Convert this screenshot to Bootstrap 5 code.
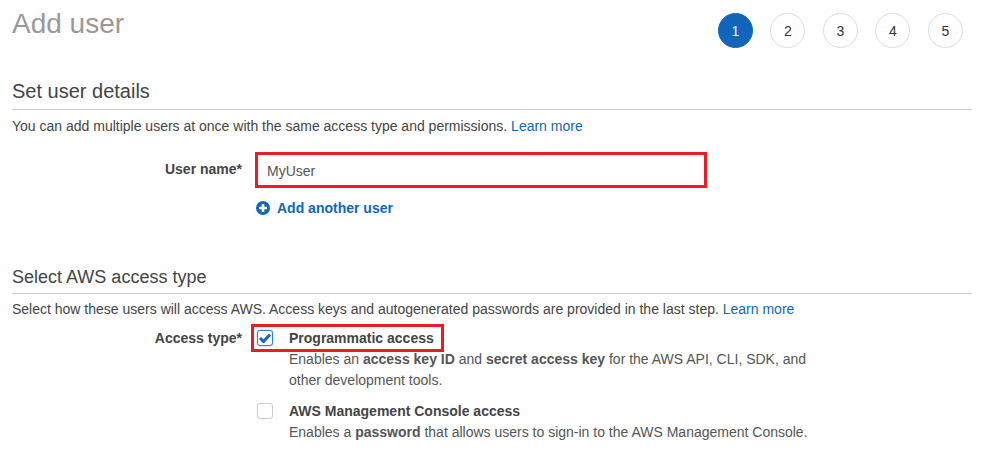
<!DOCTYPE html>
<html lang="en">
<head>
<meta charset="utf-8">
<title>Add user</title>
<link href="https://cdn.jsdelivr.net/npm/bootstrap@5.3.0/dist/css/bootstrap.min.css" rel="stylesheet">
<style>
html, body { height: 467px; overflow: hidden; }
body { font-family: "Liberation Sans", Arial, sans-serif; font-size: 14px; line-height: 20px; color: #444; background: #fff; }
a { color: #1166bb; text-decoration: none; }
.page-wrap { padding: 0 11px 0 12px; }
.top-bar { height: 62px; padding-top: 13px; }
.page-title { font-size: 28px; line-height: 22px; color: #999; font-weight: 400; margin: 0; }
.step-list { gap: 17.55px; padding-right: 9px; }
.step-dot { width: 35px; height: 35px; border-radius: 50%; border: 1px solid #ddd; font-size: 14px; color: #333; }
.step-dot.on { background: #1166bb; border-color: #1166bb; color: #fff; font-weight: 400; }
.sect-head { font-size: 20px; line-height: 26px; font-weight: 400; color: #444; margin: 16px 0 0; padding-bottom: 5px; border-bottom: 1px solid #ccc; }
.sect-head.second { font-size: 18px; margin-top: 0; padding-bottom: 3px; }
.sect-note { margin: 6px 0 0; color: #444; }
.second-wrap .sect-note { margin-top: 5px; }
.name-row { margin-top: 16px; }
.field-label { width: 230px; text-align: right; font-weight: 700; color: #444; }
.name-row .field-label { padding-top: 7px; }
.name-box { width: 452px; height: 36px; margin-left: 13px; border: 3px solid #ed1c24; padding: 2px 9px 0; color: #555; font-size: 14px; line-height: 28px; font-family: inherit; outline: 0; border-radius: 0; }
.add-link { margin: 10px 0 0 244px; font-weight: 700; gap: 7px; }
.add-link svg { display: block; }
.second-wrap { margin-top: 46px; }
.access-row { margin-top: 5px; }
.access-row .field-label { padding-top: 4px; }
.access-col { margin-left: 9px; }
.mark-frame { border: 3px solid #ed1c24; height: 28px; width: 193px; padding-left: 3px; margin-bottom: -3px; }
.tick { width: 16px; height: 16px; border-radius: 3px; border: 1px solid #ccc; flex: none; background: #fff; margin-right: 16px; }
.tick.on { border: 1.5px solid #2f7fd1; box-shadow: 0 0 2px #8fbce8; }
.opt-title { font-weight: 700; color: #444; }
.opt-desc { margin-left: 38px; width: 530px; color: #555; line-height: 21px; }
.opt-two { margin-top: 10px; padding-left: 6px; }
.opt-two .tick { margin-right: 16px; }
.opt-two .opt-desc { margin-left: 32px; margin-top: 1px; }
</style>
</head>
<body>
<div class="page-wrap">
  <div class="top-bar d-flex justify-content-between align-items-start">
    <h1 class="page-title">Add user</h1>
    <div class="step-list d-flex">
      <div class="step-dot on d-flex align-items-center justify-content-center">1</div>
      <div class="step-dot d-flex align-items-center justify-content-center">2</div>
      <div class="step-dot d-flex align-items-center justify-content-center">3</div>
      <div class="step-dot d-flex align-items-center justify-content-center">4</div>
      <div class="step-dot d-flex align-items-center justify-content-center">5</div>
    </div>
  </div>
  <h2 class="sect-head">Set user details</h2>
  <p class="sect-note">You can add multiple users at once with the same access type and permissions. <a href="#">Learn more</a></p>
  <div class="name-row d-flex">
    <div class="field-label">User name*</div>
    <input class="name-box" type="text" value="MyUser">
  </div>
  <a href="#" class="add-link d-flex align-items-center">
    <svg width="14" height="14" viewBox="0 0 14 14"><circle cx="7" cy="7" r="7" fill="#1166bb"/><path d="M7 3v8M3 7h8" stroke="#fff" stroke-width="2.6"/></svg>
    <span>Add another user</span>
  </a>
  <div class="second-wrap">
    <h2 class="sect-head second">Select AWS access type</h2>
    <p class="sect-note">Select how these users will access AWS. Access keys and autogenerated passwords are provided in the last step. <a href="#">Learn more</a></p>
    <div class="access-row d-flex">
      <div class="field-label">Access type*</div>
      <div class="access-col">
        <div class="mark-frame d-flex align-items-center">
          <span class="tick on d-flex align-items-center justify-content-center">
            <svg width="12" height="10" viewBox="0 0 12 10"><path d="M1 5l3.5 3.5L11 1.5" fill="none" stroke="#1166bb" stroke-width="3"/></svg>
          </span>
          <span class="opt-title">Programmatic access</span>
        </div>
        <div class="opt-desc">Enables an <b>access key ID</b> and <b>secret access key</b> for the AWS API, CLI, SDK, and<br>other development tools.</div>
        <div class="opt-two">
          <div class="d-flex align-items-center">
            <span class="tick"></span>
            <span class="opt-title">AWS Management Console access</span>
          </div>
          <div class="opt-desc">Enables a <b>password</b> that allows users to sign-in to the AWS Management Console.</div>
        </div>
      </div>
    </div>
  </div>
</div>
<script src="https://cdn.jsdelivr.net/npm/bootstrap@5.3.0/dist/js/bootstrap.bundle.min.js"></script>
</body>
</html>
